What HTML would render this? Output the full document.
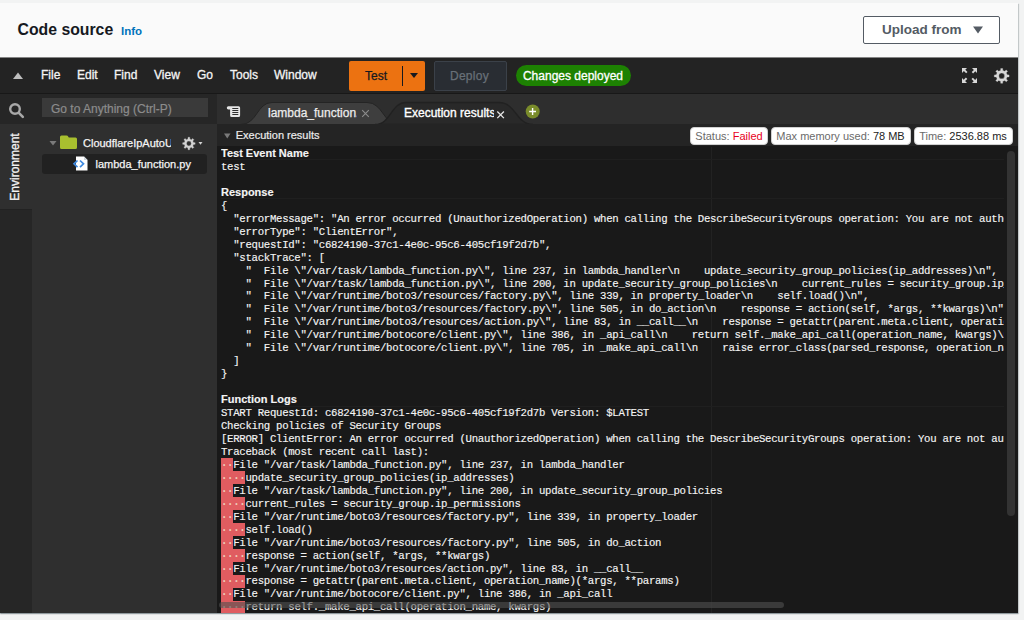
<!DOCTYPE html>
<html lang="en">
<head>
<meta charset="utf-8">
<title>Code source</title>
<style>
*{box-sizing:border-box;margin:0;padding:0}
html,body{width:1024px;height:620px;overflow:hidden;background:#f2f3f3;font-family:"Liberation Sans",Arial,sans-serif}
.abs{position:absolute}
#card{position:absolute;left:0;top:3px;width:1018px;height:610px;background:#fafafa;box-shadow:0 1px 1px 0 rgba(0,28,36,.3),1px 1px 1px 0 rgba(0,28,36,.15)}
#title{position:absolute;left:17.500px;top:18px;font-size:15.800px;font-weight:bold;color:#16191f;line-height:18px;white-space:nowrap}
#info{position:absolute;left:121px;top:21px;font-size:11.5px;font-weight:bold;color:#0073bb;line-height:14px}
#upload{position:absolute;left:863px;top:13px;width:137px;height:28px;border:1px solid #545b64;border-radius:2px;background:#fff;color:#545b64;font-weight:bold;font-size:13.5px;line-height:26px;padding-left:18px;white-space:nowrap}
#upload svg{position:absolute;left:109px;top:9px}
#ide{position:absolute;left:0;top:57px;width:1018px;height:556px;background:#1c1c1c;overflow:hidden}
#menubar{position:absolute;left:0;top:0;width:1018px;height:37px;background:#232323}
.mi{position:absolute;top:11px;font-size:12px;line-height:14px;color:#f4f4f4;white-space:nowrap;-webkit-text-stroke:0.300px #f4f4f4}
#testbtn{position:absolute;left:349px;top:4px;width:76px;height:30px;background:#ec7211;border-radius:2px;color:#16191f;font-size:12px;line-height:30px;-webkit-text-stroke:0.250px #16191f}
#testbtn span{position:absolute;left:16px;top:0}
#testbtn i{position:absolute;left:53px;top:5px;width:1px;height:20px;background:#16191f}
#testbtn b{position:absolute;left:61px;top:12px;width:0;height:0;border-left:4px solid transparent;border-right:4px solid transparent;border-top:5px solid #16191f}
#deploy{position:absolute;left:434px;top:4px;width:73px;height:30px;border:1px solid #3b4149;border-radius:2px;background:#292d33;letter-spacing:0.300px;color:#687078;font-size:12px;line-height:28px;text-align:center;-webkit-text-stroke:0.250px #687078;padding-right:2px}
#pill{position:absolute;left:515.500px;top:8px;width:115px;height:21px;border-radius:11px;background:#1d8102;color:#fff;font-size:12px;line-height:22px;text-align:center;white-space:nowrap;-webkit-text-stroke:0.300px #fff}
#row2{position:absolute;left:0;top:36px;width:1018px;height:31px;background:#262626;border-top:1px solid #181818}
#search{position:absolute;left:42px;top:4px;width:166px;height:19px;background:#3a3a3a;color:#8c8c8c;font-size:12px;line-height:22px;-webkit-text-stroke:0.200px #8c8c8c;padding-left:9px;white-space:nowrap}
#tabbar{position:absolute;left:217px;top:0;width:801px;height:30px;background:#2e2e2e}
#left{position:absolute;left:0;top:67px;width:32px;height:489px;background:#262626}
#envtab{position:absolute;left:0;top:0;width:32px;height:86px;background:#2f2f2f;border-bottom:1px solid #222}
#envtxt{position:absolute;left:-25px;top:36px;width:80px;height:14px;transform:rotate(-90deg);font-size:12px;line-height:14px;color:#f4f4f4;text-align:center;white-space:nowrap;-webkit-text-stroke:0.300px #f4f4f4}
#tree{position:absolute;left:32px;top:67px;width:185px;height:489px;background:#2f2f2f}
#splitter{position:absolute;left:217px;top:67px;width:2px;height:489px;background:#191919}
.trow{position:absolute;font-size:11px;line-height:14px;color:#f4f4f4;white-space:nowrap;-webkit-text-stroke:0.250px #f4f4f4}
#sel{position:absolute;left:10px;top:30px;width:165px;height:20px;background:#212121;border-radius:3px}
#pane{position:absolute;left:217px;top:67px;width:801px;height:489px;background:#191919}
#exhdr{position:absolute;left:0;top:0;width:801px;height:22px;background:#242424}
#exhdr .t{position:absolute;left:18.700px;top:4px;font-size:11px;line-height:14px;color:#ececec;white-space:nowrap;-webkit-text-stroke:0.200px #ececec}
.badge{position:absolute;top:3px;height:18px;background:#fff;border:1px solid #d0d0d0;border-radius:4px;font-size:11px;line-height:16px;color:#6a6a6a;text-align:center;white-space:nowrap}
.badge b{font-weight:normal;color:#222}
.badge em{font-style:normal;color:#e8001c}
#code{position:absolute;left:4px;top:22px;width:783px;height:467px;overflow:hidden;font-family:"Liberation Mono",monospace;font-size:10.700px;letter-spacing:-0.300px;color:#f4f4f4;white-space:pre;-webkit-text-stroke:0.150px #f4f4f4}
#code .l{height:12.957px;line-height:16.700px;overflow:visible}
#code .h{font-family:"Liberation Sans",Arial,sans-serif;font-weight:bold;font-size:11px;line-height:14.770px;letter-spacing:0}
#code .r{color:#f1d3b0}
#hl{position:absolute;left:4px;top:22px;width:783px;height:467px}
#hl i{position:absolute;left:0;width:783px;height:1px;background:#1f1f1f}
#reds{position:absolute;left:4px;top:22px;width:30px;height:467px;overflow:hidden}
#reds i{position:absolute;left:0;height:13px;background:#e05c60}
#reds .a{width:12.240px}
#reds .b{width:24.480px}
#vline{position:absolute;left:494px;top:23px;width:1px;height:466px;background:#222}
#vthumb{position:absolute;left:790px;top:27px;width:8px;height:365px;background:#333;border-radius:4px}
#hthumb{position:absolute;left:2px;top:478px;width:565px;height:6px;background:rgba(80,80,80,.6);border-radius:3px}
</style>
</head>
<body>
<div id="card">
  <div id="title">Code source</div>
  <div id="info">Info</div>
  <div id="upload">Upload from<svg width="10" height="8" viewBox="0 0 10 8"><path d="M0 0.500 L10 0.500 L5 7.500 Z" fill="#545b64"/></svg></div>
</div>
<div id="ide">
  <div id="menubar">
    <div class="abs" style="left:0;top:0;width:1018px;height:1px;background:#848484"></div>
    <svg class="abs" style="left:13px;top:15px" width="10" height="7" viewBox="0 0 10 7"><path d="M0 7 L5 0.5 L10 7 Z" fill="#bdbdbd"/></svg>
    <div class="mi" style="left:41px">File</div>
    <div class="mi" style="left:77px">Edit</div>
    <div class="mi" style="left:114px">Find</div>
    <div class="mi" style="left:154px">View</div>
    <div class="mi" style="left:197px">Go</div>
    <div class="mi" style="left:230px">Tools</div>
    <div class="mi" style="left:274px">Window</div>
    <div id="testbtn"><span>Test</span><i></i><b></b></div>
    <div id="deploy">Deploy</div>
    <div id="pill">Changes deployed</div>
    <svg class="abs" style="left:962px;top:11px" width="15" height="15" viewBox="0 0 15 15" fill="#d8d8d8"><path d="M0 0h5l-1.700 1.700 2.200 2.200-1.400 1.400-2.200-2.200L0 5z"/><path d="M15 0v5l-1.700-1.700-2.200 2.200-1.400-1.400 2.200-2.200L10 0z"/><path d="M0 15v-5l1.700 1.700 2.200-2.200 1.400 1.400-2.200 2.200L5 15z"/><path d="M15 15h-5l1.700-1.700-2.200-2.200 1.400-1.400 2.200 2.200L15 10z"/></svg>
    <svg class="abs" style="left:950px;top:0" width="68" height="37" viewBox="0 0 68 37"><path fill="#d6d6d6" fill-rule="evenodd" stroke="#d6d6d6" stroke-width="0.300" stroke-linejoin="round" d="M50.63 13.51 L50.71 11.52 L52.69 11.52 L52.77 13.51 L54.76 14.33 L56.22 12.98 L57.62 14.38 L56.27 15.84 L57.09 17.83 L59.08 17.91 L59.08 19.89 L57.09 19.97 L56.27 21.96 L57.62 23.42 L56.22 24.82 L54.76 23.47 L52.77 24.29 L52.69 26.28 L50.71 26.28 L50.63 24.29 L48.64 23.47 L47.18 24.82 L45.78 23.42 L47.13 21.96 L46.31 19.97 L44.32 19.89 L44.32 17.91 L46.31 17.83 L47.13 15.84 L45.78 14.38 L47.18 12.98 L48.64 14.33 Z M48.85 18.90 a2.85 2.85 0 1 0 5.70 0 a2.85 2.85 0 1 0 -5.70 0 Z"/></svg>
  </div>
  <div id="row2">
    <svg class="abs" style="left:8px;top:8px" width="17" height="17" viewBox="0 0 17 17"><circle cx="7" cy="7" r="4.800" fill="none" stroke="#a8a8a8" stroke-width="2.400"/><path d="M10.800 10.800 L14.800 14.800" stroke="#a8a8a8" stroke-width="2.600" stroke-linecap="round"/></svg>
    <div id="search">Go to Anything (Ctrl-P)</div>
    <div id="tabbar">
      <svg class="abs" style="left:0;top:0" width="801" height="30" viewBox="217 93 801 30">
        <path d="M241 123.500 C257 123.500 257 101.500 272 101.500 L367 101.500 C383 101.500 383 123.500 399 123.500 Z" fill="#3e3e3e" stroke="#242424" stroke-width="1"/>
        <path d="M375 123.500 C391 123.500 391 101.500 406 101.500 L499 101.500 C516 101.500 516 123.500 533 123.500 Z" fill="#292929" stroke="#212121" stroke-width="1.300"/>
        <rect x="217" y="123" width="801" height="1" fill="#1d1d1d"/>
        <path d="M228.300 105.200 h10.300 q1.500 0 1.500 1.500 v7.800 q0 1.500 -1.500 1.500 h-7 q-1.500 0 -1.500 -1.500 v-6 h-1.800 q-1.500 0 -1.500 -1.700 q0 -1.600 1.500 -1.600 z" fill="#e6e6e6"/>
        <g stroke="#2e2e2e" stroke-width="1"><path d="M232.300 107.500h6M232.300 109.500h6M232.300 111.500h6M232.300 113.500h6"/></g>
        <circle cx="532.700" cy="110.500" r="7" fill="#7a8c2b"/>
        <path d="M529.200 110.500h6.800M532.600 107.100v6.800" stroke="#fff" stroke-width="1.400"/>
        <path d="M362.200 109.200l6.600 6.600M368.800 109.200l-6.600 6.600" stroke="#8c8c8c" stroke-width="1.100"/>
        <path d="M497.300 110.500l6.600 6.600M503.900 110.500l-6.600 6.600" stroke="#e8e8e8" stroke-width="1.300"/>
      </svg>
      <div class="abs" style="left:51px;top:12px;width:89px;overflow:hidden;font-size:12px;line-height:14px;color:#ececec;white-space:nowrap;-webkit-text-stroke:0.250px #ececec">lambda_function.py</div>
      <div class="abs" style="left:187px;top:12px;width:90px;overflow:hidden;font-size:12px;line-height:14px;color:#fff;white-space:nowrap;-webkit-text-stroke:0.350px #fff">Execution results</div>
    </div>
  </div>
  <div id="left"><div id="envtab"><div id="envtxt">Environment</div></div></div>
  <div id="tree">
    <div id="sel"></div>
    <svg class="abs" style="left:0;top:0" width="185" height="60" viewBox="32 124 185 60">
      <path d="M49.500 141 h7 l-3.500 4.500 z" fill="#7a7a7a"/>
      <path d="M60 137 q0 -1.500 1.500 -1.500 h5 q1.200 0 1.800 1.200 l0.500 0.800 h6.700 q1.500 0 1.500 1.500 v8.500 q0 1.500 -1.500 1.500 h-14 q-1.500 0 -1.500 -1.500 z" fill="#a8bf2f"/>
      <path fill="#d2d2d2" fill-rule="evenodd" stroke="#d2d2d2" stroke-width="0.300" stroke-linejoin="round" d="M187.99 138.94 L188.06 137.26 L189.74 137.26 L189.81 138.94 L191.48 139.63 L192.72 138.49 L193.91 139.68 L192.77 140.92 L193.46 142.59 L195.14 142.66 L195.14 144.34 L193.46 144.41 L192.77 146.08 L193.91 147.32 L192.72 148.51 L191.48 147.37 L189.81 148.06 L189.74 149.74 L188.06 149.74 L187.99 148.06 L186.32 147.37 L185.08 148.51 L183.89 147.32 L185.03 146.08 L184.34 144.41 L182.66 144.34 L182.66 142.66 L184.34 142.59 L185.03 140.92 L183.89 139.68 L185.08 138.49 L186.32 139.63 Z M186.50 143.50 a2.40 2.40 0 1 0 4.80 0 a2.40 2.40 0 1 0 -4.80 0 Z"/>
      <path d="M198.500 142 h4 l-2 2.800 z" fill="#d4d4d4"/>
      <path d="M76 156.500 h8 l3.500 3.500 v10.500 h-11.500 z" fill="#fff"/>
      <path d="M84 156.500 v3.500 h3.500 z" fill="#cfd6dd"/>
      <path d="M77.500 160.500 l-3.500 3.300 3.500 3.300 M80 160.500 l3.500 3.300 -3.500 3.300" fill="none" stroke="#3f8ae0" stroke-width="1.700"/>
    </svg>
    <div class="trow" style="left:51px;top:12px;width:88px;overflow:hidden">CloudflareIpAutoUpdate</div>
    <div class="trow" style="left:63.500px;top:33px">lambda_function.py</div>
  </div>
  <div id="pane">
    <div id="exhdr">
      <svg class="abs" style="left:7px;top:9px" width="7" height="6" viewBox="0 0 7 6"><path d="M0 0.500h6.500l-3.250 5z" fill="#7a7a7a"/></svg>
      <div class="t">Execution results</div>
      <div class="badge" style="left:473px;width:78px">Status: <em>Failed</em></div>
      <div class="badge" style="left:553.500px;width:140px">Max memory used: <b>78 MB</b></div>
      <div class="badge" style="left:696.500px;width:99px">Time: <b>2536.88 ms</b></div>
    </div>
    <div id="vline"></div>
<div id="hl"><i style="top:13px"></i><i style="top:52px"></i><i style="top:260px"></i></div>
<div id="reds"><i class="a" style="top:312px"></i><i class="b" style="top:325px"></i><i class="a" style="top:338px"></i><i class="b" style="top:351px"></i><i class="a" style="top:364px"></i><i class="b" style="top:377px"></i><i class="a" style="top:390px"></i><i class="b" style="top:403px"></i><i class="a" style="top:416px"></i><i class="b" style="top:429px"></i><i class="a" style="top:442px"></i><i class="b" style="top:455px"></i></div>
<div id="code"><div class="l h">Test Event Name</div><div class="l">test</div><div class="l">&nbsp;</div><div class="l h">Response</div><div class="l">{</div><div class="l">  "errorMessage": "An error occurred (UnauthorizedOperation) when calling the DescribeSecurityGroups operation: You are not authorized to perform this operation.",</div><div class="l">  "errorType": "ClientError",</div><div class="l">  "requestId": "c6824190-37c1-4e0c-95c6-405cf19f2d7b",</div><div class="l">  "stackTrace": [</div><div class="l">    "  File \"/var/task/lambda_function.py\", line 237, in lambda_handler\n    update_security_group_policies(ip_addresses)\n",</div><div class="l">    "  File \"/var/task/lambda_function.py\", line 200, in update_security_group_policies\n    current_rules = security_group.ip_permissions\n",</div><div class="l">    "  File \"/var/runtime/boto3/resources/factory.py\", line 339, in property_loader\n    self.load()\n",</div><div class="l">    "  File \"/var/runtime/boto3/resources/factory.py\", line 505, in do_action\n    response = action(self, *args, **kwargs)\n",</div><div class="l">    "  File \"/var/runtime/boto3/resources/action.py\", line 83, in __call__\n    response = getattr(parent.meta.client, operation_name)(*args, **params)\n",</div><div class="l">    "  File \"/var/runtime/botocore/client.py\", line 386, in _api_call\n    return self._make_api_call(operation_name, kwargs)\n",</div><div class="l">    "  File \"/var/runtime/botocore/client.py\", line 705, in _make_api_call\n    raise error_class(parsed_response, operation_name)\n"</div><div class="l">  ]</div><div class="l">}</div><div class="l">&nbsp;</div><div class="l h">Function Logs</div><div class="l">START RequestId: c6824190-37c1-4e0c-95c6-405cf19f2d7b Version: $LATEST</div><div class="l">Checking policies of Security Groups</div><div class="l">[ERROR] ClientError: An error occurred (UnauthorizedOperation) when calling the DescribeSecurityGroups operation: You are not authorized to perform this operation.</div><div class="l">Traceback (most recent call last):</div><div class="l"><span class="r">··</span>File "/var/task/lambda_function.py", line 237, in lambda_handler</div><div class="l"><span class="r">····</span>update_security_group_policies(ip_addresses)</div><div class="l"><span class="r">··</span>File "/var/task/lambda_function.py", line 200, in update_security_group_policies</div><div class="l"><span class="r">····</span>current_rules = security_group.ip_permissions</div><div class="l"><span class="r">··</span>File "/var/runtime/boto3/resources/factory.py", line 339, in property_loader</div><div class="l"><span class="r">····</span>self.load()</div><div class="l"><span class="r">··</span>File "/var/runtime/boto3/resources/factory.py", line 505, in do_action</div><div class="l"><span class="r">····</span>response = action(self, *args, **kwargs)</div><div class="l"><span class="r">··</span>File "/var/runtime/boto3/resources/action.py", line 83, in __call__</div><div class="l"><span class="r">····</span>response = getattr(parent.meta.client, operation_name)(*args, **params)</div><div class="l"><span class="r">··</span>File "/var/runtime/botocore/client.py", line 386, in _api_call</div><div class="l"><span class="r">····</span>return self._make_api_call(operation_name, kwargs)</div></div>
    <div id="vthumb"></div>
    <div id="hthumb"></div>
  </div>
</div>
</body>
</html>
